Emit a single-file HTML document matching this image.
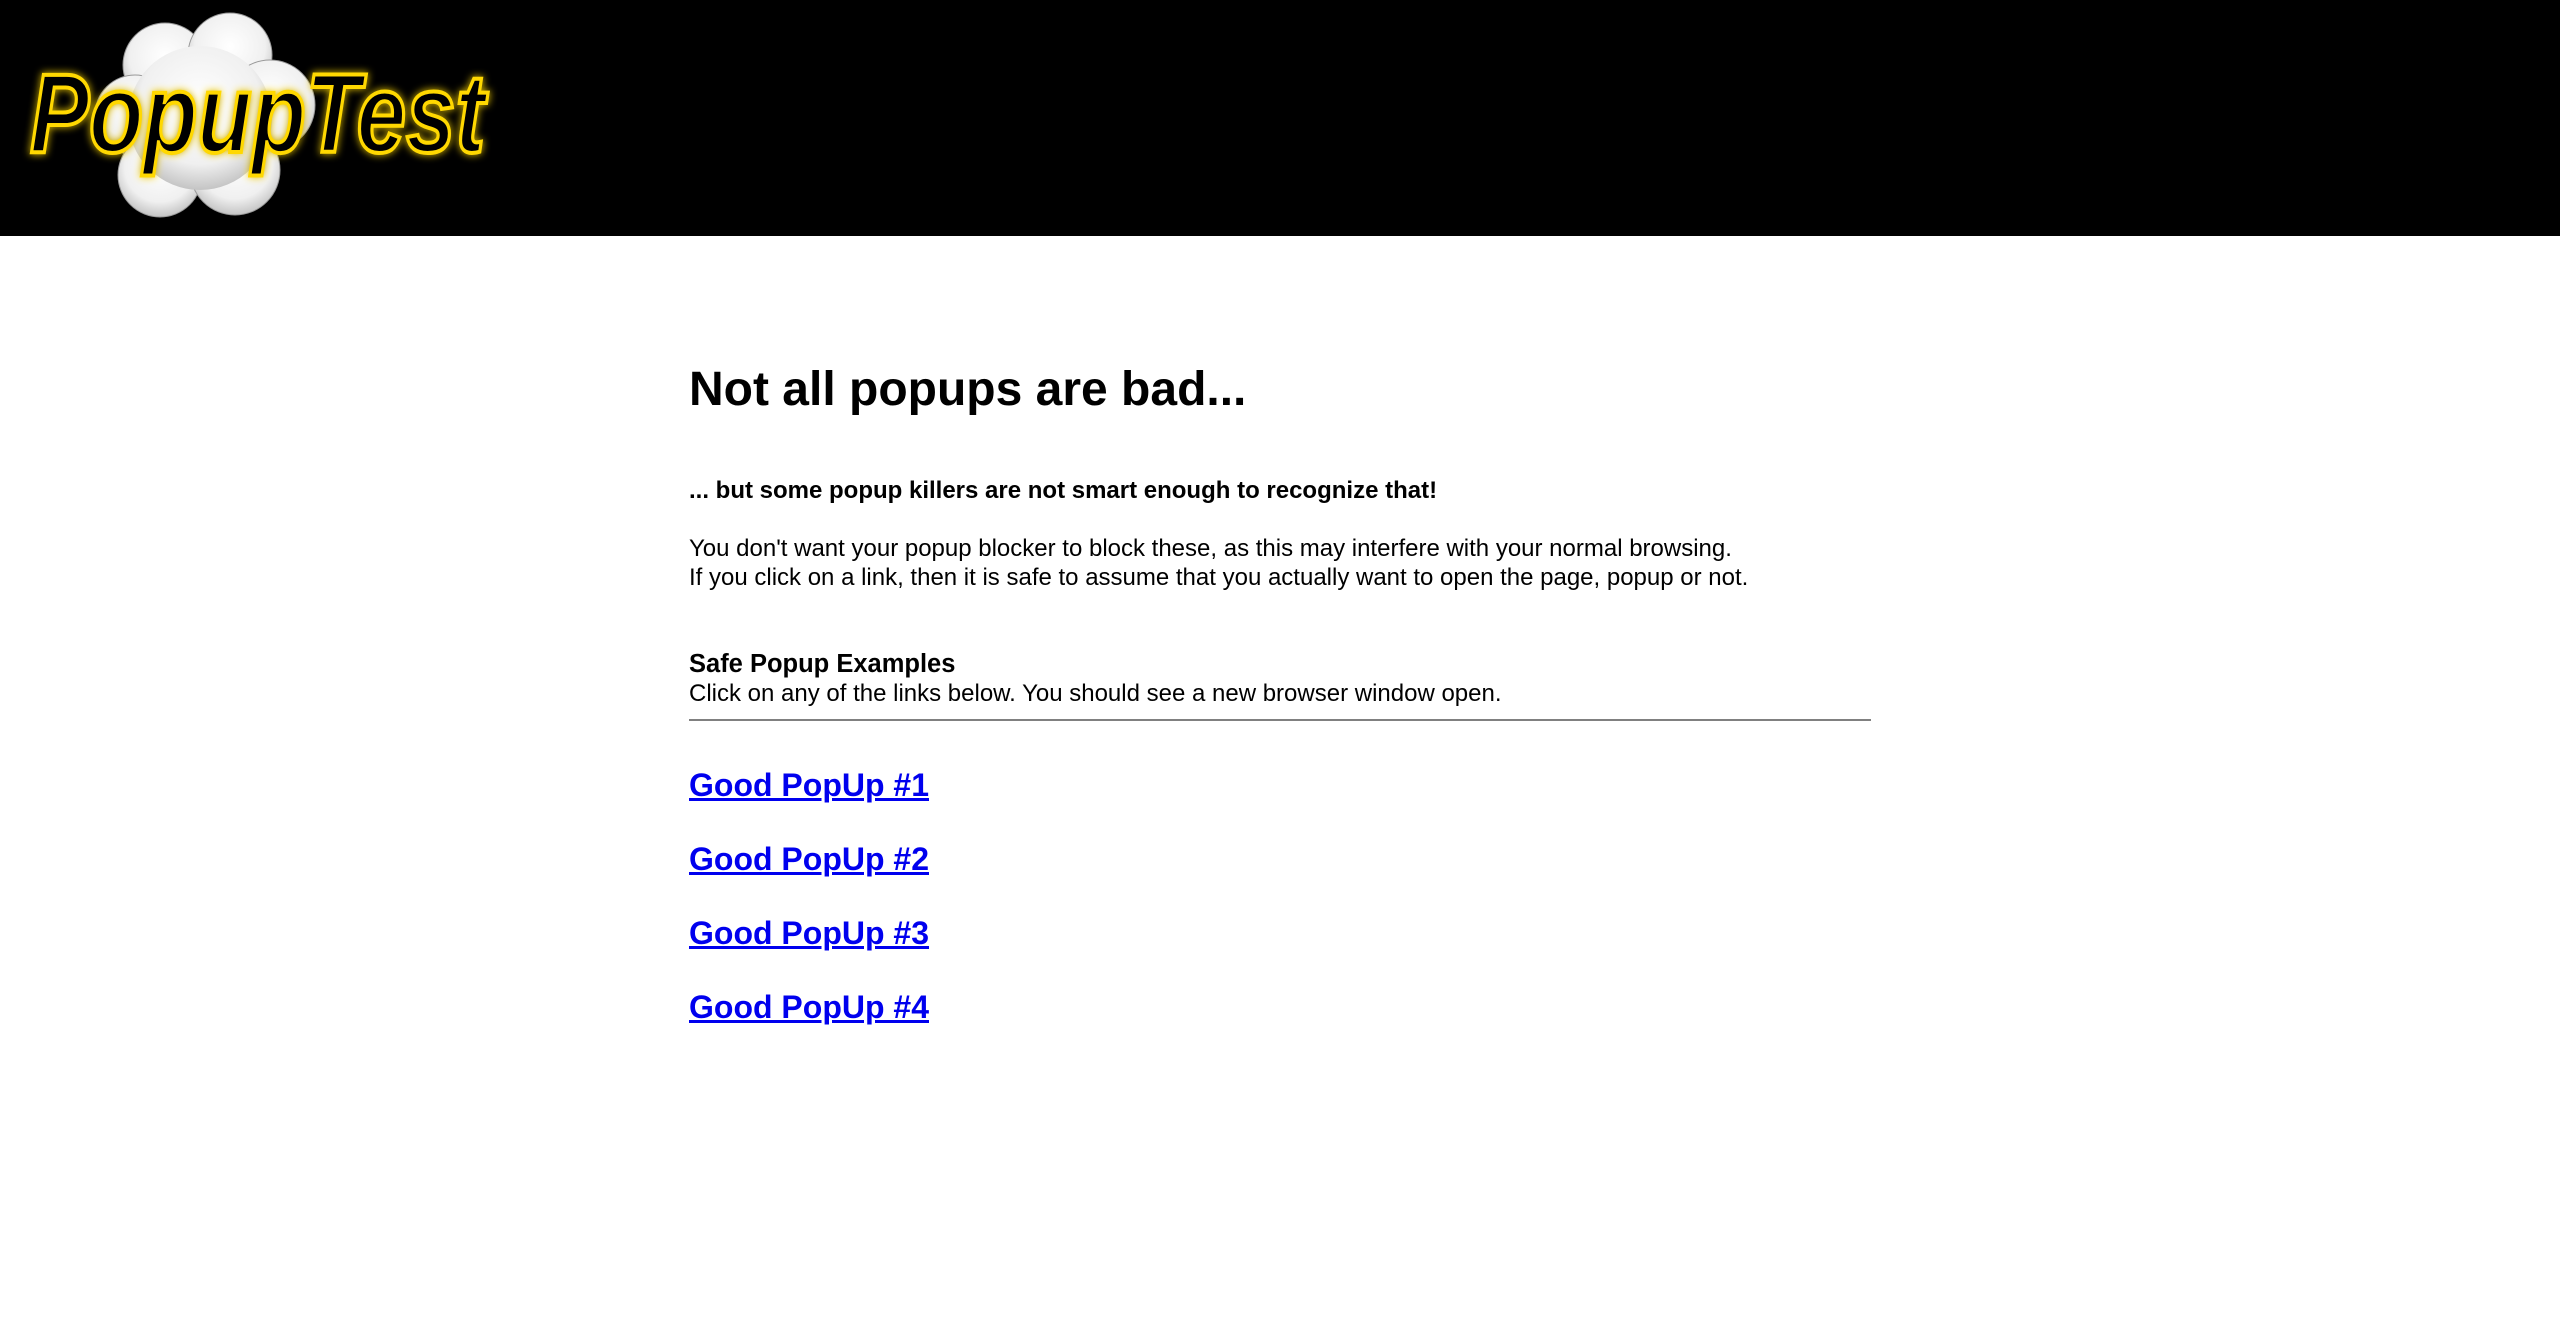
<!DOCTYPE html>
<html><head><meta charset="utf-8"><style>
html,body{margin:0;padding:0;background:#fff;width:2560px;height:1318px;overflow:hidden;font-family:"Liberation Sans",Arial,sans-serif;color:#000}
#hdr{position:absolute;left:0;top:0;width:2560px;height:236px;background:#000}
.t{position:absolute;left:689px;white-space:nowrap}
a{color:#0000ee;text-decoration:underline;font-weight:bold;font-size:32px;line-height:38px}
</style></head><body>
<div id="hdr">
<svg width="520" height="236" viewBox="0 0 520 236">
<defs>
<radialGradient id="cg" cx="50%" cy="40%" r="60%"><stop offset="0" stop-color="#fff"/><stop offset="0.7" stop-color="#f0f0f0"/><stop offset="1" stop-color="#c4c4c4"/></radialGradient>
<filter id="gl" x="-10%" y="-20%" width="120%" height="140%"><feGaussianBlur stdDeviation="4" result="b"/><feMerge><feMergeNode in="b"/><feMergeNode in="SourceGraphic"/></feMerge></filter>
</defs>
<g fill="url(#cg)" stroke="#999" stroke-width="1">
<circle cx="165" cy="65" r="42"/>
<circle cx="230" cy="55" r="42"/>
<circle cx="270" cy="105" r="45"/>
<circle cx="135" cy="115" r="40"/>
<circle cx="160" cy="175" r="42"/>
<circle cx="235" cy="170" r="45"/>
</g>
<circle cx="200" cy="118" r="72" fill="url(#cg)"/>
<text x="30" y="152" font-family="Liberation Sans" font-weight="bold" font-style="italic" font-size="112" textLength="455" lengthAdjust="spacingAndGlyphs" fill="#000" stroke="#ffd800" stroke-width="4" filter="url(#gl)">PopupTest</text>
</svg>
</div>
<div class="t" style="top:362px;font-size:48px;line-height:56px;font-weight:bold">Not all popups are bad...</div>
<div class="t" style="top:476px;font-size:24px;line-height:29px;font-weight:bold">... but some popup killers are not smart enough to recognize that!</div>
<div class="t" style="top:534px;font-size:24px;line-height:29px">You don't want your popup blocker to block these, as this may interfere with your normal browsing.<br>If you click on a link, then it is safe to assume that you actually want to open the page, popup or not.</div>
<div class="t" style="top:650px;font-size:24px;line-height:29px"><b style="font-size:25.5px">Safe Popup Examples</b><br>Click on any of the links below. You should see a new browser window open.</div>
<div style="position:absolute;left:689px;top:719px;width:1182px;height:2px;background:#808080"></div>
<div class="t" style="top:766px"><a href="#">Good PopUp #1</a></div>
<div class="t" style="top:840px"><a href="#">Good PopUp #2</a></div>
<div class="t" style="top:914px"><a href="#">Good PopUp #3</a></div>
<div class="t" style="top:988px"><a href="#">Good PopUp #4</a></div>
</body></html>
